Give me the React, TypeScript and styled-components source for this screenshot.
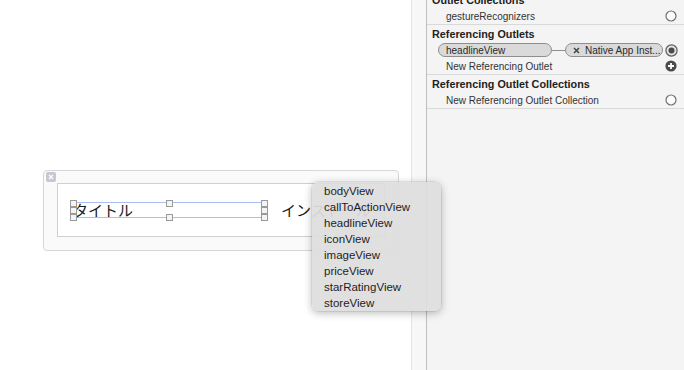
import React from "react";
import styled, { createGlobalStyle } from "styled-components";

const GlobalStyle = createGlobalStyle`
  html, body {
    margin: 0;
    padding: 0;
    background: #ffffff;
    font-family: "Liberation Sans", Arial, sans-serif;
  }
`;

const menuItems = [
  "bodyView",
  "callToActionView",
  "headlineView",
  "iconView",
  "imageView",
  "priceView",
  "starRatingView",
  "storeView",
];

function EmptyCircle() {
  return (
    <svg width="12" height="12" viewBox="0 0 12 12">
      <circle cx="6" cy="6" r="5" fill="#fbfbfb" stroke="#707070" strokeWidth="1.2" />
    </svg>
  );
}

function FilledCircle() {
  return (
    <svg width="13" height="13" viewBox="0 0 13 13">
      <circle cx="6.5" cy="6.5" r="5.6" fill="#e2e2e2" stroke="#5c5c5c" strokeWidth="1.2" />
      <circle cx="6.5" cy="6.5" r="3" fill="#4a4a4a" />
    </svg>
  );
}

function PlusCircle() {
  return (
    <svg width="12" height="12" viewBox="0 0 12 12">
      <circle cx="6" cy="6" r="5.6" fill="#4b4b4b" />
      <path d="M6 3v6M3 6h6" stroke="#ffffff" strokeWidth="1.8" />
    </svg>
  );
}

function Cross() {
  return (
    <svg width="7" height="7" viewBox="0 0 7 7">
      <path d="M1 1l5 5M6 1l-5 5" stroke="#444" strokeWidth="1.5" />
    </svg>
  );
}

export default function App() {
  return (
    <>
      <GlobalStyle />
      <Screen>
        <Canvas>
          <ViewBox>
            <CloseBadge>
              <svg width="6" height="6" viewBox="0 0 6 6">
                <path d="M1 1l4 4M5 1l-4 4" stroke="#ffffff" strokeWidth="1.2" />
              </svg>
            </CloseBadge>
            <InnerView>
              <Selection>
                <LabelText>タイトル</LabelText>
                <Handle $x="0%" $y="0%" />
                <Handle $x="50%" $y="0%" />
                <Handle $x="100%" $y="0%" />
                <Handle $x="0%" $y="50%" />
                <Handle $x="100%" $y="50%" />
                <Handle $x="0%" $y="100%" />
                <Handle $x="50%" $y="100%" />
                <Handle $x="100%" $y="100%" />
              </Selection>
              <LabelText>インストール</LabelText>
            </InnerView>
          </ViewBox>
        </Canvas>
        <Gutter />
        <Inspector>
          <Section $first>
            <Header>Outlet Collections</Header>
            <Row>
              <span>gestureRecognizers</span>
              <EmptyCircle />
            </Row>
          </Section>
          <Section>
            <Header>Referencing Outlets</Header>
            <PillRow>
              <Pill $width={114}>headlineView</Pill>
              <Connector />
              <Pill $width={98}>
                <Cross />
                <span>Native App Inst...</span>
              </Pill>
              <IconSlot>
                <FilledCircle />
              </IconSlot>
            </PillRow>
            <Row>
              <span>New Referencing Outlet</span>
              <PlusCircle />
            </Row>
          </Section>
          <Section>
            <Header>Referencing Outlet Collections</Header>
            <Row>
              <span>New Referencing Outlet Collection</span>
              <EmptyCircle />
            </Row>
          </Section>
        </Inspector>
        <Menu>
          {menuItems.map((m) => (
            <MenuItem key={m}>{m}</MenuItem>
          ))}
        </Menu>
      </Screen>
    </>
  );
}

const Screen = styled.div`
  position: relative;
  display: flex;
  width: 684px;
  height: 370px;
  overflow: hidden;
`;

const Canvas = styled.div`
  width: 411px;
  flex-shrink: 0;
  background: #ffffff;
  padding: 170px 0 0 43px;
  box-sizing: border-box;
`;

const ViewBox = styled.div`
  position: relative;
  width: 356px;
  height: 81px;
  box-sizing: border-box;
  border: 1px solid #d6d6d6;
  border-radius: 4px;
  background: #fafafa;
  padding: 12px 13px 13px 13px;
`;

const CloseBadge = styled.div`
  position: absolute;
  left: 2px;
  top: 1px;
  width: 10px;
  height: 10px;
  border-radius: 2px;
  background: #c4c9d0;
  display: flex;
  align-items: center;
  justify-content: center;
`;

const InnerView = styled.div`
  height: 100%;
  box-sizing: border-box;
  border: 1px solid #cfcfcf;
  background: #ffffff;
  display: flex;
  align-items: center;
  gap: 17px;
  padding: 0 0 0 15px;
`;

const Selection = styled.div`
  position: relative;
  width: 191px;
  height: 16px;
  box-sizing: border-box;
  border-top: 1px solid #a9bff0;
  border-bottom: 1px solid #a9bff0;
  display: flex;
  align-items: center;
`;

const Handle = styled.div<{ $x: string; $y: string }>`
  position: absolute;
  left: ${(p) => p.$x};
  top: ${(p) => p.$y};
  width: 5px;
  height: 5px;
  margin: -3px 0 0 -3px;
  border: 1px solid #9a9a9a;
  background: #f4f4f4;
`;

const LabelText = styled.span`
  font-family: "Noto Sans CJK JP", sans-serif;
  font-size: 15px;
  color: #1a1a1a;
  line-height: 16px;
  white-space: nowrap;
`;

const Gutter = styled.div`
  width: 14px;
  flex-shrink: 0;
  background: #f7f7f7;
  border-left: 1px solid #e4e4e4;
  border-right: 1px solid #bfbfbf;
`;

const Inspector = styled.div`
  flex: 1;
  background: #f4f4f4;
  display: flex;
  flex-direction: column;
  font-size: 10px;
  color: #333333;
`;

const Section = styled.div<{ $first?: boolean }>`
  display: flex;
  flex-direction: column;
  margin-top: ${(p) => (p.$first ? "-9px" : "0")};
  padding-top: 1px;
  border-bottom: 1px solid #d9d9d9;
`;

const Header = styled.div`
  height: 16px;
  line-height: 16px;
  padding-left: 5px;
  font-size: 10.8px;
  font-weight: bold;
  color: #222222;
`;

const Row = styled.div`
  height: 16px;
  display: flex;
  align-items: center;
  justify-content: space-between;
  padding: 0 7px 0 19px;
`;

const PillRow = styled.div`
  height: 16px;
  display: flex;
  align-items: center;
  padding: 0 6px 0 11px;
`;

const Pill = styled.div<{ $width: number }>`
  width: ${(p) => p.$width}px;
  height: 14px;
  box-sizing: border-box;
  border: 1px solid #8e8e8e;
  border-radius: 7px;
  background: #dadada;
  display: flex;
  align-items: center;
  gap: 5px;
  padding-left: 7px;
  color: #2a2a2a;
  white-space: nowrap;
`;

const Connector = styled.div`
  width: 13px;
  height: 1px;
  background: #8e8e8e;
`;

const IconSlot = styled.div`
  margin-left: auto;
  display: flex;
`;

const Menu = styled.div`
  position: absolute;
  left: 312px;
  top: 182px;
  width: 129px;
  height: 129px;
  box-sizing: border-box;
  padding-top: 1px;
  border-radius: 6px;
  background: rgba(222, 222, 222, 0.94);
  box-shadow: 0 2px 8px rgba(0, 0, 0, 0.28), 0 0 0 0.5px rgba(0, 0, 0, 0.12);
`;

const MenuItem = styled.div`
  height: 16px;
  line-height: 16px;
  padding-left: 12px;
  font-size: 11.5px;
  color: #1e1e1e;
`;
